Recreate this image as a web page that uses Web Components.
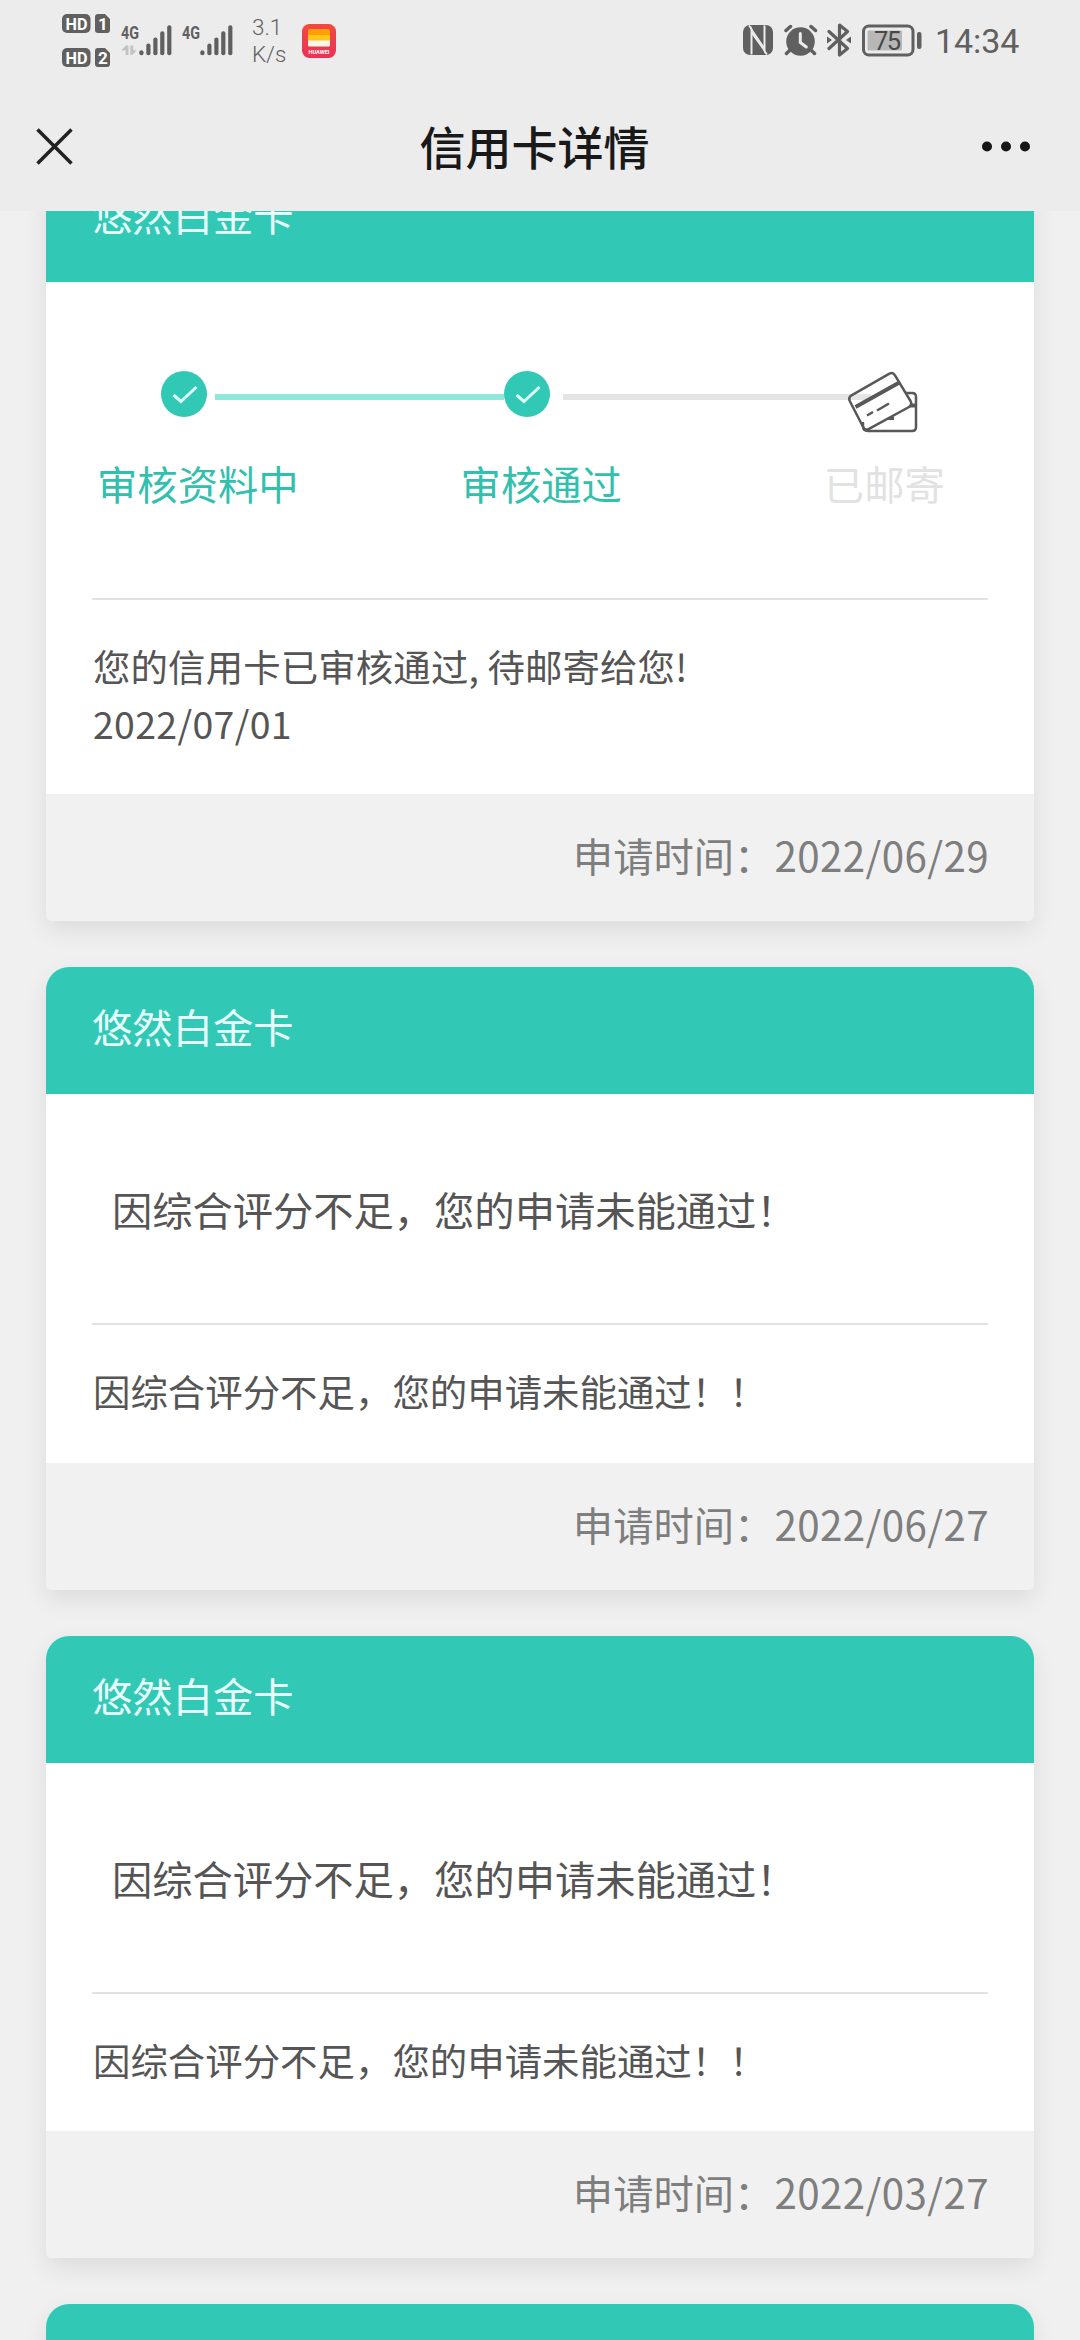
<!DOCTYPE html>
<html lang="zh-CN">
<head>
<meta charset="utf-8">
<title>信用卡详情</title>
<style>
html,body{margin:0;background:#f0f0f0}
body{height:2340px;overflow:hidden;font-family:"Noto Sans CJK SC",sans-serif;color:#555}
</style>
</head>
<body>
<app-page>
  <card-item heading="悠然白金卡" date="2022/06/29" class="first">
    <step-track slot="main"></step-track>
    <div style="letter-spacing:.12px">您的信用卡已审核通过, 待邮寄给您!</div><div style="letter-spacing:.35px">2022/07/01</div>
  </card-item>
  <card-item heading="悠然白金卡" date="2022/06/27">
    <reject-note slot="main">因综合评分不足，您的申请未能通过！</reject-note>
    因综合评分不足，您的申请未能通过！！
  </card-item>
  <card-item heading="悠然白金卡" date="2022/03/27">
    <reject-note slot="main">因综合评分不足，您的申请未能通过！</reject-note>
    因综合评分不足，您的申请未能通过！！
  </card-item>
  <card-item></card-item>
</app-page>
<script>
const define = (name, html) => customElements.define(name, class extends HTMLElement {
  constructor() {
    super();
    this.attachShadow({mode: 'open'}).innerHTML = html;
  }
  connectedCallback() {
    this.shadowRoot.querySelectorAll('[data-attr]').forEach(n => {
      n.textContent = this.getAttribute(n.dataset.attr) || '';
    });
    // a card without a date has no footer
    const footer = this.shadowRoot.querySelector('footer');
    if (footer && !this.hasAttribute('date')) footer.remove();
  }
});

define('signal-bars', `
<style>:host{display:block;width:51px;height:34px}svg{display:block}
text{font:700 18px "Roboto",sans-serif;fill:#606060}</style>
<svg width="51" height="34" viewBox="0 0 51 34"><text x="0" y="16.5" textLength="18" lengthAdjust="spacingAndGlyphs">4G</text>
<g fill="#606060"><rect x="18.3" y="28.3" width="4.2" height="5" rx="2"/><rect x="25.3" y="21.5" width="4.2" height="11.8" rx="2"/><rect x="32.3" y="15.5" width="4.2" height="17.8" rx="2"/><rect x="39.2" y="9.3" width="4.2" height="24" rx="2"/><rect x="46.2" y="3.3" width="4.2" height="30" rx="2"/></g></svg>`);

define('status-bar', `
<style>
:host{display:flex;height:81px;box-sizing:border-box;padding:0 61px 0 62px;justify-content:space-between;color:#606060}
.g{display:flex;height:81px;align-items:flex-start}
svg{display:block;flex:none}
.hd{margin:13px 11px 0 0}
.s1{position:relative;margin:22px 10px 0 0}.s1 svg{position:absolute;left:0;top:22px}
.s2{margin:22px 19px 0 0}
.sp{width:50px;margin-top:14px;font:300 22.5px/27px Roboto,sans-serif;letter-spacing:-.1px}
.app{margin-top:24px}
.time{font:400 34px/40px Roboto,sans-serif;margin:21px 0 0 13px;letter-spacing:-.1px;width:84px;white-space:nowrap}
.b{font:700 17px Roboto,sans-serif;fill:#fff}
</style>
<div class="g">
<svg class="hd" width="48" height="56" viewBox="0 0 48 56">
 <g fill="#606060"><rect x="0" y="1" width="28.5" height="19" rx="5"/><rect x="0" y="35" width="28.5" height="19" rx="5"/>
 <path d="M36 1h7l5 5v11a3 3 0 0 1-3 3h-9a3 3 0 0 1-3-3V4a3 3 0 0 1 3-3zM36 35h7l5 5v11a3 3 0 0 1-3 3h-9a3 3 0 0 1-3-3V38a3 3 0 0 1 3-3z"/></g>
 <text class="b" x="3.5" y="16.7" textLength="22" lengthAdjust="spacingAndGlyphs">HD</text><text class="b" x="3.5" y="50.7" textLength="22" lengthAdjust="spacingAndGlyphs">HD</text>
 <text class="b" x="36" y="16.7">1</text><text class="b" x="36" y="50.7">2</text>
</svg>
<div class="s1"><signal-bars></signal-bars><svg width="18" height="12" viewBox="0 0 18 12"><path d="M0 6.5 5 1.5h2.5V11H4.5V6.2zM9.3 1.5h3v4.800H16L11 11H9.300z" fill="#c3c3c3"/></svg></div>
<signal-bars class="s2"></signal-bars>
<div class="sp"><div>3.1</div><div>K/s</div></div>
<svg class="app" width="34" height="34" viewBox="0 0 34 34"><defs><linearGradient id="r" x1="0" y1="0" x2="0" y2="1"><stop offset="0" stop-color="#f2493f"/><stop offset="1" stop-color="#ea3158"/></linearGradient></defs>
<rect width="34" height="34" rx="7.5" fill="url(#r)"/><path d="M6 7a2 2 0 0 1 2-2h18a2 2 0 0 1 2 2v5H6z" fill="#ff9f05"/><path d="M6 11h22v6H6z" fill="#ffc61a"/><path d="M6 16.5h22v4.500a1.500 1.500 0 0 1-1.500 1.500h-19A1.500 1.500 0 0 1 6 21z" fill="#fff6e6"/>
<text x="6.5" y="29.5" textLength="21" lengthAdjust="spacingAndGlyphs" style="font:700 5px Roboto;fill:#fff">HUAWEI</text></svg>
</div>
<div class="g">
<svg style="margin:25px 11px 0 0" width="30" height="30" viewBox="0 0 30 30"><path d="M7 0h16a7 7 0 0 1 7 7v16a7 7 0 0 1-7 7H7a7 7 0 0 1-7-7V7a7 7 0 0 1 7-7z" fill="#606060"/><path d="M8.500 29.500V4.500Q8 2 6 .8M21.500.5v25q.5 2.500 2.500 3.700" fill="none" stroke="#ececec" stroke-width="2"/><path d="M8.500 3 21.500 22v5L8.500 9z" fill="#ececec"/></svg>
<svg style="margin:24px 9px 0 0" width="34" height="32" viewBox="0 0 34 32"><circle cx="16.500" cy="17.500" r="14.300" fill="#606060"/><path d="M2 6.500 6.500 2.500M27 2.500l4.500 4M6 26l-3.500 3.500M27 26l3.500 3.500" stroke="#606060" stroke-width="3.500" stroke-linecap="round"/><path d="M16.300 9.500v9l6 4.500" fill="none" stroke="#ececec" stroke-width="3" stroke-linecap="round"/></svg>
<svg style="margin:23px 11px 0 0" width="24" height="34" viewBox="0 0 24 34"><path d="M2 8.500 20.500 25.500 12.500 32V2l8 6.500L2 25.500" fill="none" stroke="#606060" stroke-width="3.200" stroke-linejoin="round" stroke-linecap="round"/><path d="M0 13.500 5 17l-5 3.500zM24 13.500 19 17l5 3.500z" fill="#606060"/></svg>
<svg style="margin:24px 0 0 0" width="60" height="33" viewBox="0 0 60 33"><rect x="1.500" y="2" width="49.500" height="29" rx="5.500" fill="none" stroke="#606060" stroke-width="3"/><rect x="5.500" y="6.500" width="34.500" height="20" rx="1" fill="#b7b7b7"/><rect x="55" y="8" width="4.500" height="17" rx="2" fill="#606060"/><text x="12" y="25.800" textLength="27" style="font:400 25.500px Roboto;fill:#484848">75</text></svg>
<div class="time">14:34</div>
</div>`);

define('nav-bar', `
<style>
:host{display:flex;height:130px;box-sizing:border-box;padding:0 50px 0 36px;justify-content:space-between;align-items:flex-start;color:#191919}
svg{display:block}
.t{font-size:46px;font-weight:500;line-height:60px;margin:34px 0 0 13px}
</style>
<svg style="margin-top:47px" width="38" height="38" viewBox="0 0 38 38"><path d="M1.500 1.500 35.500 35.500M35.500 1.500 1.500 35.500" stroke="#222" stroke-width="3.500" fill="none"/></svg>
<div class="t">信用卡详情</div>
<svg style="margin-top:60px" width="48" height="12" viewBox="0 0 48 12"><g fill="#161616"><circle cx="5" cy="5.500" r="5"/><circle cx="24" cy="5.500" r="5"/><circle cx="43" cy="5.500" r="5"/></g></svg>`);

define('app-page', `
<style>
:host{display:flex;flex-direction:column;height:2340px;overflow:hidden}
header{flex:none;height:211px;background:#ececec}
main{flex:1;min-height:0;overflow:hidden;padding:0 46px;display:flex;flex-direction:column;gap:46px}
::slotted(*){flex:none}
::slotted(.first){margin-top:-56px}
</style>
<header><status-bar></status-bar><nav-bar></nav-bar></header>
<main><slot></slot></main>`);

define('card-item', `
<style>
:host{display:block;border-radius:23px 23px 6px 6px;overflow:hidden;background:#fff;box-shadow:0 9px 24px rgba(0,0,0,.085)}
h2{margin:0;height:127px;box-sizing:border-box;padding:30px 46px 0;background:#32c8b6;color:#e6fffb;font-size:40.320px;font-weight:400;line-height:58px}
.d{margin:0 46px;border-top:2px solid #e2e2e2;padding:38px 0 43px 1px;font-size:37.440px;line-height:56.500px}
footer{height:127px;box-sizing:border-box;padding:32px 45px 0 0;display:flex;justify-content:flex-end;background:#f1f1f1;color:#7e7e7e;font-size:40.320px;line-height:58px}
footer span{letter-spacing:.4px}
</style>
<h2 data-attr="heading"></h2>
<slot name="main"></slot>
<div class="d"><slot></slot></div>
<footer>申请时间：<span data-attr="date"></span></footer>`);

define('reject-note', `
<style>:host{display:block;height:229px;box-sizing:border-box;padding:85px 0 0 66px;font-size:40.320px;letter-spacing:-.05px;line-height:60px}</style><slot></slot>`);

define('step-track', `
<style>
:host{display:block;height:316px;box-sizing:border-box;padding-top:88px}
.t{display:flex;padding-left:115px;height:62px}
.c{width:46px;height:46px;margin-top:1px;display:block}
.l{height:6px;margin-top:24px;background:#90e8da}
.card{margin:1px 0 0 -23px}
.n{display:flex;padding-left:51px;margin-top:21px;font-size:40.320px;line-height:60px;color:#32c0ae}
svg{flex:none}
</style>
<div class="t">
<svg class="c" viewBox="0 0 46 46"><circle cx="23" cy="23" r="23" fill="#32c8b6"/><path d="M12.500 24 20 30.500 35.500 16" fill="none" stroke="#dffffa" stroke-width="3"/></svg>
<div class="l" style="width:289px;margin-left:8px"></div>
<svg class="c" viewBox="0 0 46 46"><circle cx="23" cy="23" r="23" fill="#32c8b6"/><path d="M12.500 24 20 30.500 35.500 16" fill="none" stroke="#dffffa" stroke-width="3"/></svg>
<div class="l" style="width:308px;margin-left:13px;background:#e5e5e5"></div>
<svg class="card" width="70" height="62" viewBox="0 0 70 62"><g fill="none" stroke="#585858" stroke-width="2.500" stroke-linejoin="round">
<path d="M57 22h7q4 0 4 4v30q0 4-4 4H20q-5 0-5-5v-4" />
<path d="M61 34.500h7" stroke-width="4"/><path d="M38 47.500h8" stroke-width="3"/>
<path d="M24 30.500 53.500 16 64 34 20 58.500 8 35z" fill="#fff" stroke="none"/>
<path d="M3.500 24.300 41 2.800q4-2 6 1.500L62.500 30q2 4-1.500 6L21 57.800q-3.500 2-5.500-1L2 30.500q-2-4 1.500-6.200z"/>
<path d="M7.500 36 50.500 12" stroke-width="4"/><path d="M19 44.500l6-3.500M29 39.500l12-7" stroke-width="2.500"/></g></svg>
</div>
<div class="n"><span>审核资料中</span><span style="margin-left:162px">审核通过</span><span style="margin-left:202px;color:#e2e2e2">已邮寄</span></div>`);
</script>
</body>
</html>
